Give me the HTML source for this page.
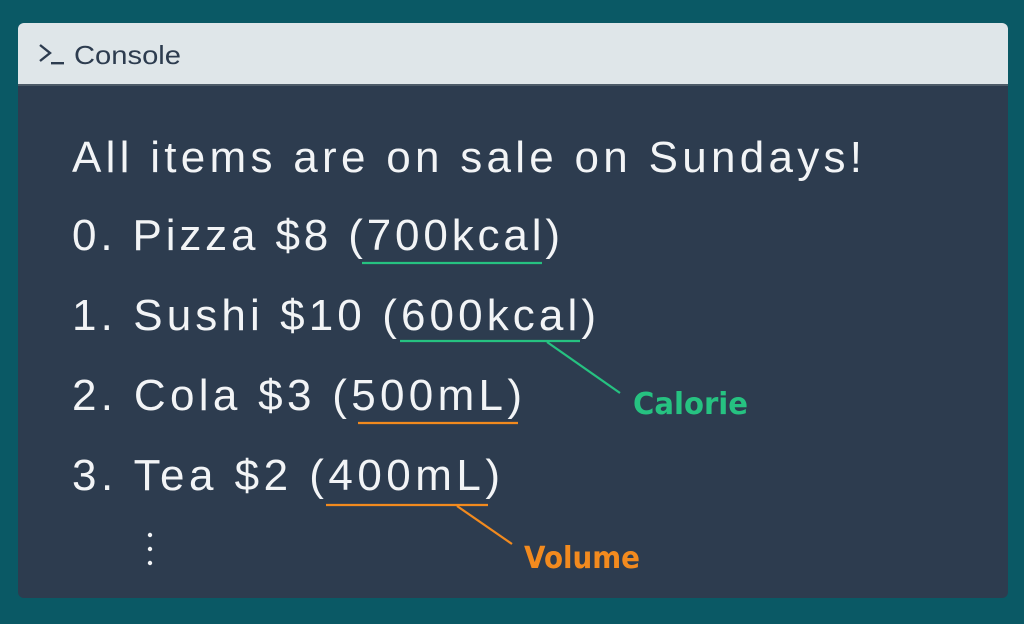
<!DOCTYPE html>
<html><head><style>
body{margin:0;background:#0a5965;width:1024px;height:624px;overflow:hidden}
</style></head><body>
<svg width="1024" height="624" xmlns="http://www.w3.org/2000/svg" style="display:block">
<rect x="0" y="0" width="1024" height="624" fill="#0a5965"/>
<rect x="18" y="23" width="990" height="575" rx="6" fill="#2d3c4f"/>
<path d="M24 23H1002a6 6 0 0 1 6 6V84H18V29a6 6 0 0 1 6-6z" fill="#dfe6e9"/>
<rect x="18" y="84" width="990" height="2" fill="#4d5b68"/>
<path d="M40 45l10 8-10 8" stroke="#2d3c4f" stroke-width="2.4" fill="none"/>
<rect x="51" y="62" width="13" height="2.4" fill="#2d3c4f"/>
<text x="74" y="64" font-family="Liberation Sans, sans-serif" font-size="26" fill="#2d3c4f" textLength="107" lengthAdjust="spacingAndGlyphs">Console</text>
<g font-family="Liberation Sans, sans-serif" font-size="44" fill="#f2f4f6">
<text x="72" y="172" textLength="790">All items are on sale on Sundays!</text>
<text x="72" y="250" textLength="488">0. Pizza $8 (700kcal)</text>
<text x="72" y="330" textLength="524">1. Sushi $10 (600kcal)</text>
<text x="72" y="410" textLength="450">2. Cola $3 (500mL)</text>
<text x="72" y="490" textLength="428">3. Tea $2 (400mL)</text>
</g>
<circle cx="150" cy="535" r="2.2" fill="#f2f4f6"/>
<circle cx="150" cy="549" r="2.2" fill="#f2f4f6"/>
<circle cx="150" cy="563" r="2.2" fill="#f2f4f6"/>
<g stroke="#26c281" stroke-width="2.2" fill="none">
<line x1="362" y1="263" x2="542" y2="263"/>
<line x1="400" y1="341" x2="580" y2="341"/>
<path d="M547 342L620 393"/>
</g>
<g stroke="#f28a1e" stroke-width="2.2" fill="none">
<line x1="358" y1="423" x2="518" y2="423"/>
<line x1="326" y1="505" x2="488" y2="505"/>
<path d="M457 506L512 544"/>
</g>
<text x="633" y="414" font-family="DejaVu Sans, sans-serif" font-weight="bold" font-size="30" fill="#26c281" textLength="115" lengthAdjust="spacingAndGlyphs">Calorie</text>
<text x="524" y="568" font-family="DejaVu Sans, sans-serif" font-weight="bold" font-size="30" fill="#f28a1e" textLength="116" lengthAdjust="spacingAndGlyphs">Volume</text>
</svg>
</body></html>
